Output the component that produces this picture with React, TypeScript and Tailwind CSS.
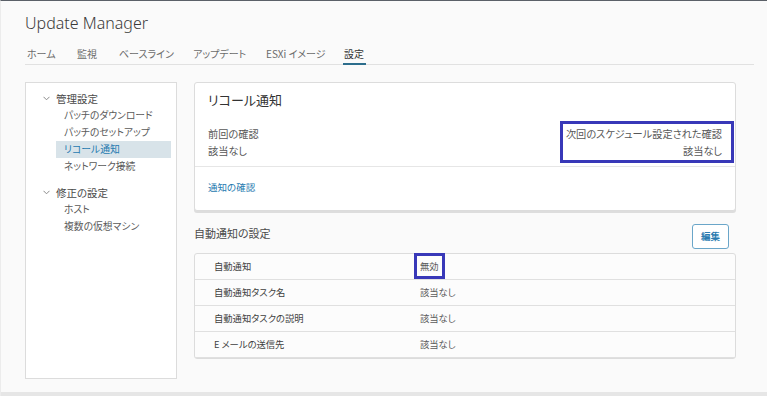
import React from 'react'

const jp = "[font-family:'Noto_Sans_CJK_JP','Noto_Sans',sans-serif] [font-feature-settings:'palt']"

const tabs = [
  { label: 'ホーム', w: 'w-[50px]' },
  { label: '監視', w: 'w-[42px]' },
  { label: 'ベースライン', w: 'w-[74px]' },
  { label: 'アップデート', w: 'w-[73px]' },
  { label: 'ESXi イメージ', w: 'w-[78px]' },
  { label: '設定', w: '' },
]

type TreeGroup = {
  title: string
  items: string[]
}

const tree: TreeGroup[] = [
  { title: '管理設定', items: [ 'パッチのダウンロード', 'パッチのセットアップ', 'リコール通知', 'ネットワーク接続' ] },
  { title: '修正の設定', items: [ 'ホスト', '複数の仮想マシン' ] },
]

const rows = [
  { label: '自動通知', value: '無効' },
  { label: '自動通知タスク名', value: '該当なし' },
  { label: '自動通知タスクの説明', value: '該当なし' },
  { label: 'E メールの送信先', value: '該当なし' },
]

const Chevron = () => (
  <svg width="7" height="5" viewBox="0 0 7 5" className="flex-none">
    <path d="M0.5 0.8 L3.5 3.8 L6.5 0.8" fill="none" stroke="#8a8a8a" strokeWidth="1" />
  </svg>
)

const App: React.FC = () => {
  return (
    <div className={`relative w-[767px] h-[396px] overflow-hidden bg-[#fafafa] border-t border-[#5b6068] border-l border-l-[#ececec] ${jp}`}>
      <div className="pl-[24px]">
        {/* Title */}
        <div className="mt-[12px] h-[20px] leading-[20px] text-[16px] font-light text-[#3a3a3a] [font-family:'Noto_Sans',sans-serif]">
          Update Manager
        </div>

        {/* Tabs */}
        <div className="mt-[10px] w-[729px] h-[22px] flex items-stretch pl-[2px] border-b border-[#e1e1e1]">
          {tabs.map((tab) => {
            const active = tab.label === '設定'
            return (
              <div key={tab.label} className={`flex flex-none ${tab.w}`}>
                <div
                  className={`relative flex items-center text-[10px] leading-none ${active ? 'text-[#333]' : 'text-[#6b6b6b]'}`}
                >
                  {tab.label}
                  {active && <div className="absolute -left-[1px] -right-[2px] bottom-[-1px] h-[2px] bg-[#2c6d8c]" />}
                </div>
              </div>
            )
          })}
        </div>

        <div className="mt-[17px] flex gap-[17px]">
          {/* Left tree */}
          <div className="w-[152px] h-[297px] flex-none bg-white border border-[#dcdcdc] pt-[7px]">
            {tree.map((group, gi) => (
              <div key={group.title} className={gi > 0 ? 'mt-[9px]' : ''}>
                <div className="flex items-center h-[17px] pl-[17px] text-[10.5px] text-[#4a4a4a]">
                  <Chevron />
                  <span className="ml-[6px]">{group.title}</span>
                </div>
                {group.items.map((item) => {
                  const selected = item === 'リコール通知'
                  return (
                    <div
                      key={item}
                      className={`ml-[30px] mr-[5px] pl-[8px] h-[17px] leading-[17px] text-[9.8px] ${
                        selected ? 'bg-[#d8e3e9] text-[#1f7ab0]' : 'text-[#5a5a5a]'
                      }`}
                    >
                      {item}
                    </div>
                  )
                })}
              </div>
            ))}
          </div>

          {/* Right content */}
          <div className="w-[542px] flex-none">
            <div className="relative h-[129px] bg-white border border-[#dcdcdc] rounded-[3px] shadow-[0_2px_0_0_#dddddd]">
              <div className="px-[13px] pt-[7px]">
                <div className="h-[20px] leading-[20px] text-[13px] text-[#333]">リコール通知</div>
                <div className="mt-[15px] flex justify-between text-[10.2px] leading-[17px] text-[#575757]">
                  <div>
                    <div>前回の確認</div>
                    <div>該当なし</div>
                  </div>
                  <div className="text-right">
                    <div>次回のスケジュール設定された確認</div>
                    <div>該当なし</div>
                  </div>
                </div>
              </div>
              <div className="mt-[7px] border-t border-[#e6e6e6] h-[42px] px-[13px] flex items-center text-[9.5px] text-[#1f7ab0]">
                通知の確認
              </div>
              <div className="absolute right-[1px] top-[38px] w-[174px] h-[42px] border-[3px] border-[#3838b8]" />
            </div>

            <div className="mt-[13px] flex items-start justify-between">
              <div className="leading-[18px] text-[11px] text-[#4a4a4a]">自動通知の設定</div>
              <button className="mr-[7px] w-[37px] h-[25px] rounded-[3px] border border-[#6aa6c9] bg-white text-[9.5px] font-bold text-[#2b7bb0]">
                編集
              </button>
            </div>

            <div className="relative mt-[4px] bg-[#fcfcfc] border border-[#dcdcdc] rounded-[3px]">
              {rows.map((row) => (
                <div key={row.label} className="flex items-center h-[26px] border-b border-[#e0e0e0] last:border-b-0 last:h-[25px] text-[9.3px]">
                  <div className="w-[225px] pl-[19px] text-[#3f3f3f]">{row.label}</div>
                  <div className="text-[#5a5a5a]">{row.value}</div>
                </div>
              ))}
              <div className="absolute left-[219px] top-[-1px] w-[31px] h-[26px] border-[3px] border-[#3838b8]" />
            </div>
          </div>
        </div>
      </div>

      {/* bottom band */}
      <div className="absolute left-0 right-0 bottom-0 h-[4px] bg-[#e6e6e6]" />
    </div>
  )
}

export default App
